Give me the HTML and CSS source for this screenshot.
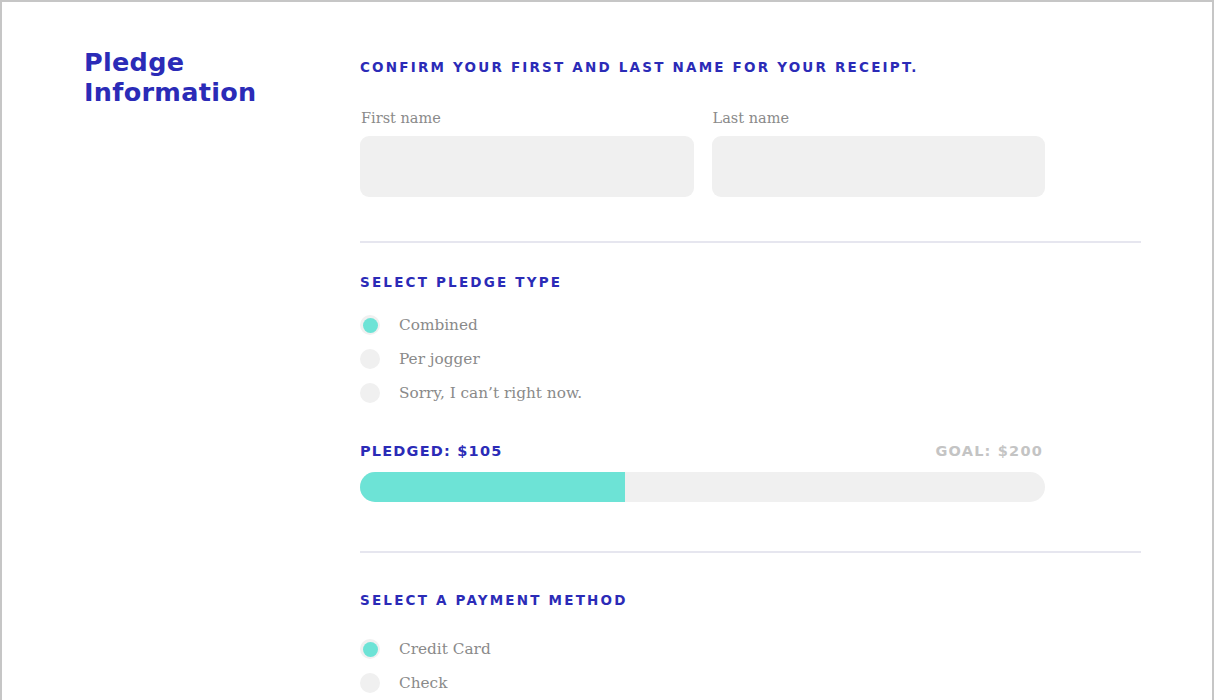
FILE: index.html
```html
<!DOCTYPE html>
<html>
<head>
<meta charset="utf-8">
<link rel="stylesheet" href="styles.css">
</head>
<body>
<div class="page">
  <aside class="side">
    <h1 class="title">Pledge<br>Information</h1>
  </aside>
  <main class="main">
    <section class="section first">
      <h2 class="heading">Confirm your first and last name for your receipt.</h2>
      <div class="fields">
        <label class="field">
          <span class="label">First name</span>
          <span class="input"></span>
        </label>
        <label class="field">
          <span class="label">Last name</span>
          <span class="input"></span>
        </label>
      </div>
    </section>
    <hr class="divider">
    <section class="section pledge">
      <h2 class="heading">Select pledge type</h2>
      <ul class="radios">
        <li class="radio on"><span class="dot"></span><span class="opt">Combined</span></li>
        <li class="radio"><span class="dot"></span><span class="opt">Per jogger</span></li>
        <li class="radio"><span class="dot"></span><span class="opt">Sorry, I can’t right now.</span></li>
      </ul>
      <div class="progress-head">
        <span class="pledged">Pledged: $105</span>
        <span class="goal">Goal: $200</span>
      </div>
      <div class="bar"><div class="fill" style="width:38.7%"></div></div>
    </section>
    <hr class="divider lower">
    <section class="section payment">
      <h2 class="heading">Select a payment method</h2>
      <ul class="radios">
        <li class="radio on"><span class="dot"></span><span class="opt">Credit Card</span></li>
        <li class="radio"><span class="dot"></span><span class="opt">Check</span></li>
      </ul>
    </section>
  </main>
</div>
</body>
</html>
```

FILE: styles.css
```css
html, body {
  margin: 0;
  padding: 0;
  background: #fff;
}
body {
  width: 1214px;
  height: 700px;
  overflow: hidden;
}
.page {
  box-sizing: border-box;
  height: 700px;
  border-top: 2px solid #c6c6c6;
  border-left: 2px solid #c6c6c6;
  border-right: 2px solid #c6c6c6;
  display: grid;
  grid-template-columns: 276px 781px;
  align-items: start;
  padding-left: 82px;
}
.title {
  margin: 45px 0 0;
  font-family: "DejaVu Sans", sans-serif;
  font-weight: bold;
  font-size: 25.5px;
  line-height: 30px;
  color: #2b2bb7;
  letter-spacing: 0.3px;
}
.main {
  padding-top: 57px;
}
.heading {
  margin: 0;
  font-family: "DejaVu Sans", sans-serif;
  font-weight: bold;
  font-size: 13.5px;
  line-height: 16px;
  letter-spacing: 2.2px;
  text-transform: uppercase;
  color: #2b2bb7;
}
.fields {
  display: flex;
  gap: 18px;
  width: 685px;
  margin-top: 34px;
}
.field {
  flex: 1;
  display: flex;
  flex-direction: column;
}
.label, .opt {
  font-family: "DejaVu Serif", serif;
  color: #8a8a8a;
}
.label {
  font-size: 14.5px;
  line-height: 18px;
  margin-bottom: 9px;
  padding-left: 1px;
}
.opt {
  font-size: 15.3px;
}
.input {
  height: 61px;
  background: #f0f0f0;
  border-radius: 9px;
}
.divider {
  border: 0;
  height: 2px;
  background: #e6e6ef;
  margin: 44px 0 0;
  width: 781px;
}
.divider.lower {
  margin-top: 49px;
}
.pledge {
  padding-top: 31px;
}
.payment {
  padding-top: 39px;
}
.radios {
  list-style: none;
  margin: 25px 0 0;
  padding: 0;
  display: flex;
  flex-direction: column;
  gap: 14px;
}
.payment .radios {
  margin-top: 31px;
}
.radio {
  display: flex;
  align-items: center;
  gap: 19px;
  height: 20px;
}
.dot {
  width: 20px;
  height: 20px;
  border-radius: 50%;
  background: #f0f0f0;
  display: flex;
  align-items: center;
  justify-content: center;
}
.radio.on .dot::after {
  content: "";
  width: 15px;
  height: 15px;
  border-radius: 50%;
  background: #6de3d6;
}
.progress-head {
  display: flex;
  justify-content: space-between;
  width: 683px;
  margin-top: 39px;
  font-family: "DejaVu Sans", sans-serif;
  font-weight: bold;
  font-size: 14.5px;
  line-height: 18px;
  letter-spacing: 1.2px;
  text-transform: uppercase;
}
.pledged { color: #2b2bb7; }
.goal { color: #c4c4c4; }
.bar {
  margin-top: 12px;
  width: 685px;
  height: 30px;
  background: #f0f0f0;
  border-radius: 15px;
  overflow: hidden;
}
.fill {
  height: 100%;
  background: #6de3d6;
}
```
